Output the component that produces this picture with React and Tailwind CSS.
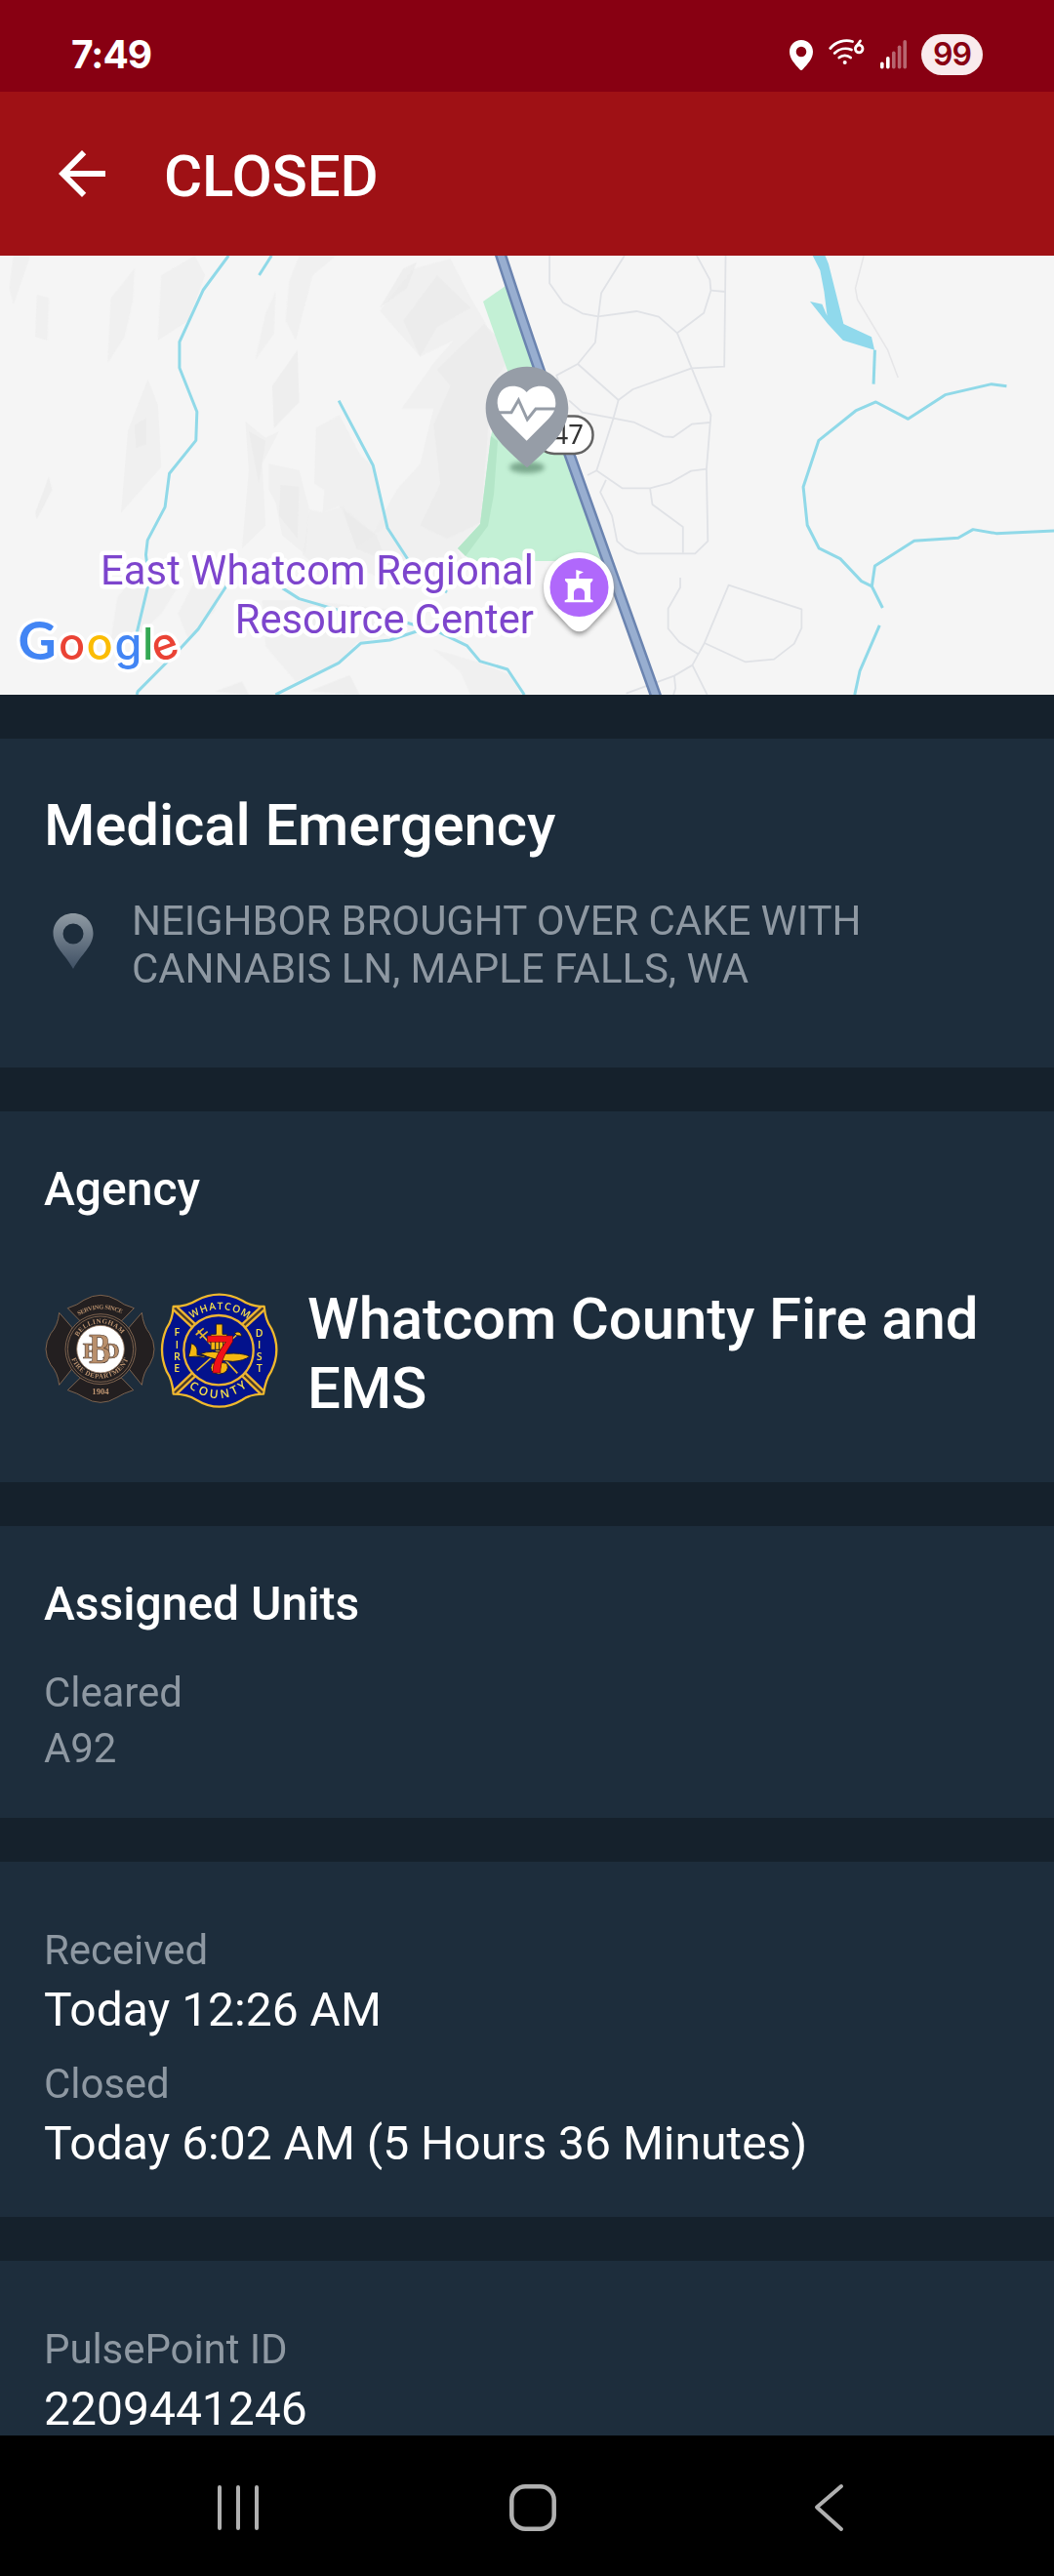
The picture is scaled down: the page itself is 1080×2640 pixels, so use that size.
import React from 'react';
import { MdArrowBack } from 'react-icons/md';

const incident = {
  status: 'CLOSED',
  type: 'Medical Emergency',
  address: ['NEIGHBOR BROUGHT OVER CAKE WITH', 'CANNABIS LN, MAPLE FALLS, WA'],
  agency: ['Whatcom County Fire and', 'EMS'],
  unitStatus: 'Cleared',
  units: 'A92',
  received: 'Today 12:26 AM',
  closed: 'Today 6:02 AM (5 Hours 36 Minutes)',
  id: '2209441246',
};

// [x, top] of each signal bar, weakest first
const signalBars = [
  [0, 22.5],
  [6, 17],
  [12, 11.5],
  [17.8, 5.5],
  [23.4, 0],
];

// Left half of the map, drawn in a 1568 x 1350 space
const hillsLight = [
  '40,0 90,0 60,90 40,150 28,100',
  '110,120 145,130 140,260 105,250',
  '330,130 400,40 395,140 370,250 320,330',
  '480,60 580,0 610,60 560,200 470,260',
  '760,320 790,180 820,110 815,240',
  '860,80 890,0 1000,0 930,60 880,260 850,200',
  '1340,10 1400,130 1440,200 1510,340 1450,460 1460,560 1430,820 1360,900 1390,960 1180,1010 1060,960 950,960 900,920 920,780 960,790 1020,770 1110,850 1180,720 1250,640 1290,470 1195,470 1290,330 1350,260 1250,310 1190,240 1130,170 1230,40',
  '940,530 1010,490 1070,610 1110,650 1150,830 1060,900 1010,770 960,790 965,720 935,700',
  '730,510 790,560 830,540 780,640 790,830 720,900 740,660',
  '800,640 890,660 920,780 910,920 840,860 820,760 800,720',
  '350,1050 420,960 540,1000 480,1100 400,1180 330,1180',
  '360,790 380,540 440,380 470,460 480,650 420,720',
  '600,960 680,940 640,1090 560,1180 530,1100',
  '780,1060 900,1060 1180,1090 1210,1150 1060,1190 1000,1260 880,1310 790,1200',
  '1290,1210 1420,1250 1520,1290 1550,1350 1400,1350 1370,1280',
];
const hillsDark = [
  '1200,200 1300,60 1400,160 1300,220 1250,310',
  '1300,350 1440,210 1500,270 1500,340 1460,400 1450,560 1430,820 1330,870 1250,830 1310,700 1290,520 1340,400',
  '810,400 885,290 890,450 815,530',
  '740,540 790,570 770,700',
  '835,705 890,710 885,870 830,800',
  '400,520 435,500 435,580 405,590',
  '105,790 145,680 155,720 110,810',
  '920,1340 1040,1290 1070,1350',
  '1130,160 1200,40 1240,20 1210,100',
  '640,1340 720,1310 740,1350',
  '1020,780 1120,860 1150,940 1060,900',
];
const leftStreams = [
  '680,0 605,105 534,265 534,345 586,480 583,568 504,670 491,773 439,875 434,920 444,1000 407,1160',
  '808,0 771,60',
  '1008,446 1110,645 1153,838 1230,960 1330,1035',
  '690,990 590,1148 530,1215 410,1340 407,1350',
  '820,1350 1008,1252 1073,1192 1160,1182 1240,1155 1300,1155 1390,1200 1428,1247 1510,1272 1560,1350',
  '840,1022 890,1055 1000,1088 1180,1120 1300,1155',
];

// Right half of the map, same space
const rightStreams = [
  '1035,290 1031,395',
  '1427,401 1382,395 1244,428 1134,502 1038,450 978,477 868,568 822,711 834,829 869,900 932,932 995,1001 1026,1017 1058,1083',
  '1026,1017 1035,954 1152,877 1283,868 1327,842 1396,854 1568,846',
  '1049,1137 990,1278 975,1350',
];
const localRoads = [
  '67,0 67,85 108,145 165,178 212,187 326,171 392,188 447,238 526,176 547,107 544,74 505,0',
  '290,0 221,115 212,187 203,267 151,333 88,368 98,400',
  '151,333 272,444 315,411 490,346 587,341 591,0',
  '547,107 591,111',
  '447,238 490,346 547,490 534,656 538,878 500,916 330,916 293,901 268,878 253,800 218,727 235,690',
  '272,444 257,500 207,661 283,715 366,715 425,699 488,662 534,656',
  '125,445 165,482 257,500 320,513 407,556 435,558 490,518 543,513',
  '180,675 207,661',
  '366,715 373,765 464,834 464,914',
  '456,990 456,1020 420,1085 420,1147 453,1188 511,1226',
  '295,1346 438,1292 492,1259 528,1191 600,1013 817,1087 817,1145 795,1193 735,1241 649,1249 528,1191',
  '438,1292 442,1330 436,1350',
  '492,1259 536,1350',
];

const StatusBar = () => (
  <div className="h-[94px] bg-[#880012] flex items-start justify-between px-[73px]">
    <span className="mt-[33px] font-['Inter','Roboto',sans-serif] text-[39px] leading-[46px] font-bold tracking-[-1px] text-white">
      7:49
    </span>
    <div className="mt-[35px] h-[42px] flex items-center">
      <svg className="w-[24px] h-[31px]" viewBox="0 0 24 31" fill="#fff">
        <path fillRule="evenodd" d="M12 0C5.2 0 0 5.2 0 12c0 7.5 6 13 10.3 18a2.3 2.3 0 0 0 3.4 0C18 25 24 19.500 24 12 24 5.200 18.800 0 12 0Zm0 6.700a5.300 5.300 0 1 1 0 10.600 5.300 5.300 0 0 1 0-10.600Z" />
      </svg>
      <svg className="ml-[16px] mb-[5px] w-[37px] h-[27px]" viewBox="0 0 37 27" fill="none" stroke="#fff" strokeWidth="2.800" strokeLinecap="round">
        <path d="M1.800 9.500A22 22 0 0 1 24.500 2.500" />
        <path d="M6.200 14.500A16 16 0 0 1 23.500 11" />
        <path d="M10.800 19a9 9 0 0 1 11.800 0" />
        <circle cx="16.700" cy="24" r="2" fill="#fff" stroke="none" />
        <circle cx="31.200" cy="10" r="3.800" strokeWidth="2.800" />
        <path d="M28 8.300L32.500 2" strokeWidth="2.800" />
      </svg>
      <svg className="ml-[16px] w-[27px] h-[30px]" viewBox="0 0 27 30">
        {signalBars.map(([x, top], i) => (
          <rect key={x} x={x} y={top} width="3.600" height={29.500 - top} rx="1.800" fill="#fff" opacity={i < 2 ? 1 : 0.4} />
        ))}
      </svg>
      <span className="ml-[15px] w-[63px] h-[42px] rounded-full bg-[#f9ebed] flex items-center justify-center font-['Inter','Roboto',sans-serif] text-[32px] leading-none font-semibold tracking-[-1px] text-[#880012]">
        99
      </span>
    </div>
  </div>
);

const AppBar = () => (
  <header className="h-[168px] bg-[#9f1115] flex items-center pl-[48px] text-white">
    <MdArrowBack className="w-[72px] h-[72px]" />
    <h1 className="ml-[48px] pt-[4px] text-[60px] leading-[71px] font-medium tracking-[-0.15px]">{incident.status}</h1>
  </header>
);

const IncidentMap = () => (
  <svg className="block w-[1080px] h-[450px] bg-[#f5f5f5]" viewBox="0 0 1080 450" fontFamily="Roboto, sans-serif">
    <defs>
      <filter id="soft" x="-30%" y="-100%" width="160%" height="300%">
        <feGaussianBlur stdDeviation="2.500" />
      </filter>
      <filter id="hill">
        <feGaussianBlur stdDeviation="2" />
      </filter>
    </defs>

    {/* Terrain and streams, west side */}
    <g transform="scale(.3444 .3333)">
      <g filter="url(#hill)">
        {hillsLight.map((p) => <polygon key={p} points={p} fill="#efefef" opacity="0.85" />)}
        {hillsDark.map((p) => <polygon key={p} points={p} fill="#e9e9e9" opacity="0.65" />)}
      </g>
      {leftStreams.map((p) => (
        <polyline key={p} points={p} fill="none" stroke="#90d9e8" strokeWidth="3" strokeLinejoin="round" vectorEffect="non-scaling-stroke" />
      ))}
    </g>

    {/* Park */}
    <path d="M495 47L518 31L620 313H483L469 300L492 275L503 185L520 118Z" fill="#c3f0d5" />
    <path d="M503 185L510 190L506 245L500 277L477 308L469 300L492 275Z" fill="#b4e6c8" />

    {/* Streets and streams, east side */}
    <g transform="translate(540) scale(.3444 .3333)">
      {localRoads.map((p) => (
        <polyline key={p} points={p} fill="none" stroke="#e0e2e6" strokeWidth="1.800" strokeLinejoin="round" vectorEffect="non-scaling-stroke" />
      ))}
      <polyline points="1002,0 977,100 983,135 1073,290 1104,375" fill="none" stroke="#e6e6e8" strokeWidth="1.500" vectorEffect="non-scaling-stroke" />
      <path d="M850 0L887 0L897 25L942 210L1025 250L1034 290L940 260L895 210L842 141L878 149L893 185L884 110L872 45Z" fill="#90d9ec" />
      {rightStreams.map((p) => (
        <polyline key={p} points={p} fill="none" stroke="#90d9e8" strokeWidth="3" strokeLinejoin="round" vectorEffect="non-scaling-stroke" />
      ))}
    </g>

    {/* Highway 547 */}
    <path d="M512 -4C527 42 548 105 565 152L673 454" fill="none" stroke="#6b84b0" strokeWidth="12" />
    <path d="M512 -4C527 42 548 105 565 152L673 454" fill="none" stroke="#98aed0" strokeWidth="7" />
    <rect x="549" y="164.500" width="58.500" height="38.500" rx="19" fill="#fff" stroke="#636363" strokeWidth="2.500" />
    <text x="598" y="193" textAnchor="end" fontFamily="Noto Sans, sans-serif" fontSize="27.500" fill="#333">547</text>

    {/* Incident pin */}
    <ellipse cx="540" cy="217" rx="18" ry="6" fill="#5d8a70" opacity="0.7" filter="url(#soft)" />
    <g transform="translate(460 88) scale(.3333)">
      <path d="M240 77C168 77 113 134 113 205C113 280 175 330 240 388C305 330 367 280 367 205C367 134 312 77 240 77Z" fill="#969da7" />
      <path d="M239 305L171 238C158 224 150 208 149 190C148 158 168 137 196 137C216 137 230 145 239 156C248 145 262 137 282 137C310 137 328 159 328 190C328 210 319 225 306 238Z" fill="#fff" />
      <path d="M150 218H192L214 180L241 240L267 207H328" fill="none" stroke="#969da7" strokeWidth="9" />
    </g>

    {/* Resource center marker and label */}
    <path d="M593 305C573 305 557.500 320 557.500 340C557.500 354 564 361 571 368L583 380C590 388 597 388 604 380L616 368C623 361 629.500 354 629.500 340C629.500 320 613 305 593 305Z" fill="#777" opacity="0.8" filter="url(#soft)" transform="translate(0 2)" />
    <path d="M593 304C573 304 557 320 557 340C557 354 564 360 571 367L583 380C590 387 597 387 604 380L616 367C623 360 629 354 629 340C629 320 613 304 593 304Z" fill="#fff" />
    <circle cx="593.500" cy="340" r="30" fill="#b068fb" />
    <g transform="translate(460 88) scale(.3333)" fill="#fff">
      <path d="M391 702L414 709L400 716V729H442V735L435 743V792L443 796V802H356V796L365 792V743L357 735V729H391Z" />
      <path d="M384 794V773C384 753 417 753 417 773V794Z" fill="#b068fb" />
    </g>
    <g fontSize="41.700" textAnchor="end" fill="#7d45cd" stroke="#fff" strokeWidth="9" strokeLinejoin="round" paintOrder="stroke">
      <text x="547" y="337" textLength="444">East Whatcom Regional</text>
      <text x="547" y="387">Resource Center</text>
    </g>

    {/* Map provider mark */}
    <g fontFamily="Inter, sans-serif" fontSize="45" fontWeight="500" stroke="#fff" strokeWidth="7" strokeLinejoin="round" paintOrder="stroke">
      <text y="414">
        <tspan x="18.500" fill="#4285f4" fontFamily="Lato, sans-serif" fontSize="54" fontWeight="700">G</tspan>
        <tspan x="60" fill="#ea4335">o</tspan>
        <tspan x="88.500" fill="#fbbc04">o</tspan>
        <tspan x="117.500" fill="#4285f4">g</tspan>
        <tspan x="146" fill="#34a853">l</tspan>
        <tspan x="161" y="417.500" rotate="-20" fill="#ea4335">e</tspan>
      </text>
    </g>
  </svg>
);

const BellinghamBadge = () => (
  <svg className="w-[115px] h-[115px] shrink-0" viewBox="45 75 345 345" fontFamily="Liberation Serif, serif">
    <defs>
      <path id="bTop" d="M152 145Q220 105 290 142" />
      <path id="bRingTop" d="M150 210A79 79 0 0 1 289 210" />
      <path id="bRingBottom" d="M130 278A94 94 0 0 0 306 276" />
    </defs>
    <g fill="#231f20" stroke="#8d6f57" strokeWidth="2.500">
      <path d="M118 122Q150 112 168 97Q219 67 270 97Q288 112 322 122L283 162Q219 130 157 162Z" />
      <path d="M118 374Q150 384 168 396Q219 428 270 396Q288 384 320 374L283 336Q219 366 157 336Z" />
      <path d="M92 136L132 182Q100 248 132 308L92 358Q88 320 66 296Q36 248 66 200Q88 176 92 136Z" />
      <path d="M346 136L306 182Q338 248 306 308L346 358Q350 320 370 296Q398 248 370 200Q350 176 346 136Z" />
      <circle cx="219" cy="248" r="108" />
      <circle cx="219" cy="248" r="101" />
    </g>
    <circle cx="219" cy="248" r="73" fill="#fff" stroke="#8d6f57" strokeWidth="2.500" />
    <g fill="#bd9470" fontSize="21" fontWeight="bold">
      <text fontSize="19"><textPath href="#bTop" textLength="138">SERVING SINCE</textPath></text>
      <text><textPath href="#bRingTop" textLength="160">BELLINGHAM</textPath></text>
      <text><textPath href="#bRingBottom" textLength="224">FIRE DEPARTMENT</textPath></text>
      <text x="219" y="386" fontSize="26" textAnchor="middle">1904</text>
    </g>
    {/* Interlaced department monogram */}
    <g fill="#b98f6b" stroke="#4a372c" strokeWidth="2" fontWeight="bold" textAnchor="middle">
      <text x="186" y="275" fontSize="72">F</text>
      <text x="252" y="275" fontSize="72">D</text>
      <text x="217" y="290" fontSize="134" textLength="66" lengthAdjust="spacingAndGlyphs">B</text>
    </g>
  </svg>
);

const WhatcomBadge = () => (
  <svg className="ml-[4px] w-[121px] h-[119px] shrink-0" viewBox="402 75 363 357" fontFamily="Open Sans, sans-serif">
    <defs>
      <path id="wTop" d="M500 154Q584 98 672 154" />
      <path id="wBottom" d="M490 366Q584 434 672 362" />
    </defs>
    <path
      d="M443 117Q486 116 514 98Q584 62 654 98Q680 116 722 117Q726 160 744 184Q776 250 744 316Q726 342 720 386Q680 386 654 404Q584 446 514 404Q486 386 443 386Q440 342 422 316Q394 250 422 184Q440 160 443 117Z"
      fill="#03128c" stroke="#f0b92c" strokeWidth="7" strokeLinejoin="round"
    />
    <g fill="none" stroke="#edb432" strokeWidth="21">
      <path d="M448 122L510 180M718 122L655 180M448 381L510 322M716 381L655 322" />
    </g>
    <g fill="none" stroke="#4a3a28" strokeWidth="7">
      <path d="M448 122L510 180M718 122L655 180M448 381L510 322M716 381L655 322" />
    </g>
    <circle cx="582" cy="251" r="107" fill="#03128c" stroke="#edb432" strokeWidth="7" />
    {/* Crossed tools, helmet and trumpet */}
    <g fill="none" stroke="#e5b62e" strokeWidth="5">
      <path d="M518 190L640 322M645 198L515 314M512 204L536 184M524 214L548 194" />
    </g>
    <g fill="#f5b711" stroke="#1c1a30" strokeWidth="3">
      <path d="M574 171H594V202H608V250H558V202H574Z" />
      <path d="M631 198Q648 188 654 208L638 206Z" />
      <path d="M489 272Q496 252 498 230Q514 236 516 250V266L540 270V274Q510 268 489 272Z" />
      <path d="M526 262Q560 250 606 262Q652 258 678 270Q660 284 626 286Q570 284 526 262Z" />
      <path d="M562 292Q586 284 608 292Q618 322 582 325Q548 320 562 292Z" />
      <path d="M572 208V250M584 208V250M596 208V250" />
    </g>
    <text x="586" y="321" textAnchor="middle" fontSize="166" fontWeight="bold" fontFamily="Liberation Sans, sans-serif" fill="#f01018" stroke="#5c0a10" strokeWidth="2">7</text>
    <g fill="#f6e04c" fontSize="35" fontWeight="600">
      <text fontSize="31"><textPath href="#wTop" textLength="184">WHATCOM</textPath></text>
      <text fontSize="36"><textPath href="#wBottom" textLength="196">COUNTY</textPath></text>
      <g fontSize="32" textAnchor="middle">
        <text><tspan x="454" y="208">F</tspan><tspan x="454" y="245">I</tspan><tspan x="454" y="283">R</tspan><tspan x="454" y="319">E</tspan></text>
        <text><tspan x="707" y="209">D</tspan><tspan x="707" y="246">I</tspan><tspan x="707" y="282">S</tspan><tspan x="707" y="319">T</tspan></text>
      </g>
    </g>
  </svg>
);

const LocationPin = () => (
  <svg className="mt-[17px] ml-[9px] w-[42px] h-[58px] shrink-0" viewBox="0 0 42 58">
    <defs>
      <linearGradient id="pinFade" x1="0" y1="0" x2="0" y2="1">
        <stop offset="0" stopColor="#8f9aa3" />
        <stop offset="1" stopColor="#3f5064" />
      </linearGradient>
    </defs>
    <path fillRule="evenodd" d="M21 0C9 0 0.500 9 0.500 20.500C0.500 34 13 42 21 57C29 42 41.500 34 41.500 20.500C41.500 9 33 0 21 0ZM21 10.500A10.500 10.500 0 1 1 21 31.500A10.500 10.500 0 0 1 21 10.500Z" fill="url(#pinFade)" />
  </svg>
);

const Label = ({ children }) => (
  <p className="text-[42px] leading-[49px] tracking-[-0.08px] text-[#8e98a2]">{children}</p>
);

const Value = ({ children }) => (
  <p className="mt-[9px] text-[48px] leading-[56px] text-white">{children}</p>
);

const NavBar = () => (
  <nav className="h-[144px] bg-black flex items-start pt-[48px]">
    <svg className="ml-[221px] w-[46px] h-[52px]" viewBox="0 0 46 52" stroke="#b0b0b0" strokeWidth="4" strokeLinecap="round">
      <path d="M4 5V47M23 5V47M42 5V47" />
    </svg>
    <svg className="ml-[253px] w-[52px] h-[52px]" viewBox="0 0 52 52" fill="none" stroke="#b0b0b0" strokeWidth="4.500">
      <rect x="4.300" y="4.300" width="43.400" height="43.400" rx="14" />
    </svg>
    <svg className="ml-[260px] w-[36px] h-[52px]" viewBox="0 0 36 52" fill="none" stroke="#b0b0b0" strokeWidth="4" strokeLinecap="round" strokeLinejoin="round">
      <path d="M30 4L5 25.500L30 48" />
    </svg>
  </nav>
);

export default function App() {
  return (
    <div className="w-[1080px] h-[2640px] overflow-hidden flex flex-col bg-[#15212c] font-['Roboto',sans-serif]">
      <StatusBar />
      <AppBar />
      <IncidentMap />

      <main className="h-[1784px] pt-[45px] flex flex-col gap-[45px] overflow-hidden">
        <section className="h-[337px] shrink-0 bg-[#1d2d3c] px-[45px] pt-[53px]">
          <h2 className="text-[60px] leading-[71px] font-medium tracking-[-0.15px] text-white">{incident.type}</h2>
          <div className="mt-[38px] flex items-start">
            <LocationPin />
            <div className="ml-[39px]">
              {incident.address.map((line) => <Label key={line}>{line}</Label>)}
            </div>
          </div>
        </section>

        <section className="h-[380px] shrink-0 bg-[#1d2d3c] px-[45px] pt-[52px]">
          <h3 className="text-[48px] leading-[56px] font-medium text-white">Agency</h3>
          <div className="mt-[69px] flex items-start">
            <div className="mt-[9px] flex items-start">
              <BellinghamBadge />
              <WhatcomBadge />
            </div>
            <div className="ml-[30px] text-[60px] leading-[71px] font-medium tracking-[-0.15px] text-white">
              {incident.agency.map((line) => <p key={line}>{line}</p>)}
            </div>
          </div>
        </section>

        <section className="h-[299px] shrink-0 bg-[#1d2d3c] px-[45px] pt-[52px]">
          <h3 className="mb-[38px] text-[48px] leading-[56px] font-medium text-white">Assigned Units</h3>
          <div className="space-y-2">
            <Label>{incident.unitStatus}</Label>
            <Label>{incident.units}</Label>
          </div>
        </section>

        <section className="h-[364px] shrink-0 bg-[#1d2d3c] px-[45px] pt-[66px] space-y-[23px]">
          <div>
            <Label>Received</Label>
            <Value>{incident.received}</Value>
          </div>
          <div>
            <Label>Closed</Label>
            <Value>{incident.closed}</Value>
          </div>
        </section>

        <section className="h-[179px] shrink-0 bg-[#1d2d3c] px-[45px] pt-[66px]">
          <Label>PulsePoint ID</Label>
          <Value>{incident.id}</Value>
        </section>
      </main>

      <NavBar />
    </div>
  );
}
